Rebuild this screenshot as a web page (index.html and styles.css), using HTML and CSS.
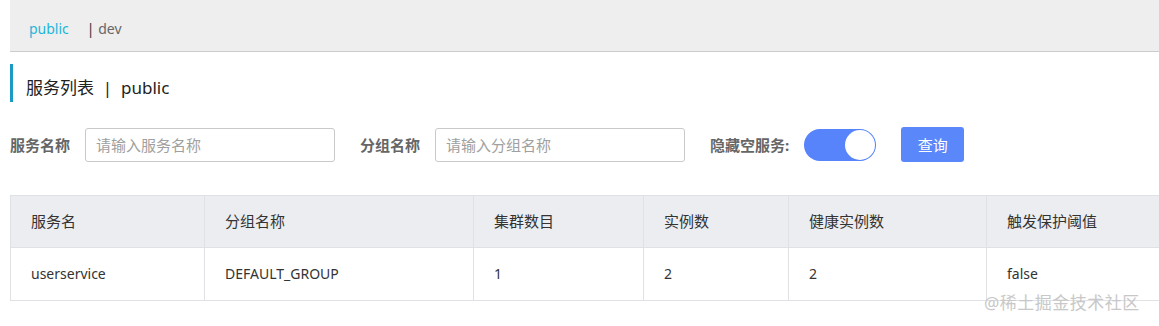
FILE: index.html
```html
<!DOCTYPE html>
<html lang="zh-CN">
  <head>
    <meta charset="UTF-8" />
    <meta name="viewport" content="width=device-width, initial-scale=1.0" />
    <title>服务列表</title>
    <link rel="stylesheet" href="styles.css">
  </head>
  <body>
    <!-- 命名空间切换 -->
    <div class="ns-bar">
      <span class="ns active">public</span>
      <span class="ns"><b class="sep">|</b> dev</span>
    </div>

    <!-- 标题 -->
    <h2 class="page-title">服务列表&nbsp; | &nbsp;public</h2>

    <!-- 查询表单 -->
    <div class="search-form">
      <label class="form-label">服务名称</label>
      <input class="form-input" type="text" placeholder="请输入服务名称" />
      <label class="form-label">分组名称</label>
      <input class="form-input" type="text" placeholder="请输入分组名称" />
      <label class="form-label">隐藏空服务:</label>
      <span class="switch on"><span class="knob"></span></span>
      <button class="btn-primary">查询</button>
    </div>

    <!-- 服务列表 -->
    <div class="table-wrap">
      <table class="service-table">
        <colgroup>
          <col style="width: 194px" />
          <col style="width: 269px" />
          <col style="width: 170px" />
          <col style="width: 145px" />
          <col style="width: 198px" />
          <col style="width: 200px" />
        </colgroup>
        <thead>
          <tr>
            <th>服务名</th>
            <th>分组名称</th>
            <th>集群数目</th>
            <th>实例数</th>
            <th>健康实例数</th>
            <th>触发保护阈值</th>
          </tr>
        </thead>
        <tbody>
          <tr>
            <td>userservice</td>
            <td>DEFAULT_GROUP</td>
            <td>1</td>
            <td>2</td>
            <td>2</td>
            <td>false</td>
          </tr>
        </tbody>
      </table>
    </div>

    <div class="watermark">@稀土掘金技术社区</div>
  </body>
</html>
```

FILE: styles.css
```css
* {
  margin: 0;
  padding: 0;
  box-sizing: border-box;
}
html,
body {
  height: 100%;
}
body {
  position: relative;
  overflow: hidden;
  padding-left: 10px;
  font-family: "Noto Sans", "Noto Sans CJK SC", sans-serif;
  font-size: 14px;
  color: #333;
  background-color: #fff;
}

/* 命名空间 */
.ns-bar {
  height: 52px;
  padding-left: 19px;
  display: flex;
  align-items: center;
  gap: 18px;
  background-color: #eee;
  border-bottom: 1px solid #ccc;
}
.ns {
  font-size: 14px;
  color: #666;
  padding-top: 5px;
}
.ns .sep {
  font-weight: normal;
  color: #333;
}
.ns.active {
  color: #1fb5d9;
}

/* 标题 */
.page-title {
  margin-top: 12px;
  height: 38px;
  padding-left: 13px;
  padding-top: 6px;
  display: flex;
  align-items: center;
  border-left: 3px solid #1a9ac4;
  font-size: 17px;
  font-weight: normal;
  color: #222;
}

/* 表单 */
.search-form {
  margin-top: 25px;
  display: flex;
  align-items: center;
  height: 35px;
}
.form-label {
  font-size: 15px;
  font-weight: bold;
  color: #666;
  margin-right: 15px;
}
.form-input {
  width: 250px;
  height: 34px;
  padding: 0 10px;
  margin-right: 25px;
  border: 1px solid #c9c9c9;
  border-radius: 3px;
  font-family: inherit;
  font-size: 15px;
  color: #333;
  outline: none;
}
.form-input::placeholder {
  color: #a0a0a0;
}
.switch {
  display: inline-block;
  position: relative;
  width: 72px;
  height: 32px;
  border-radius: 16px;
  background-color: #5784fb;
  margin-right: 25px;
}
.switch .knob {
  position: absolute;
  top: 1px;
  right: 1px;
  width: 30px;
  height: 30px;
  border-radius: 50%;
  background-color: #fff;
}
.btn-primary {
  width: 63px;
  height: 35px;
  border: none;
  border-radius: 3px;
  background-color: #5a87fa;
  color: #fff;
  font-family: inherit;
  font-size: 15px;
}

/* 表格 */
.table-wrap {
  margin-top: 33px;
  width: 1200px;
}
.service-table {
  border-collapse: collapse;
  table-layout: fixed;
  width: 1176px;
}
.service-table th,
.service-table td {
  text-align: left;
  padding-left: 20px;
  border: 1px solid #dfe1e5;
  font-weight: normal;
  color: #333;
}
.service-table th {
  height: 52px;
  font-size: 15px;
  padding-bottom: 3px;
  background-color: #ebedf0;
}
.service-table td {
  height: 53px;
  padding-bottom: 1px;
}

.watermark {
  position: absolute;
  left: 984px;
  top: 289px;
  font-size: 17px;
  color: #c8c8c8;
  letter-spacing: 0.5px;
}
```
